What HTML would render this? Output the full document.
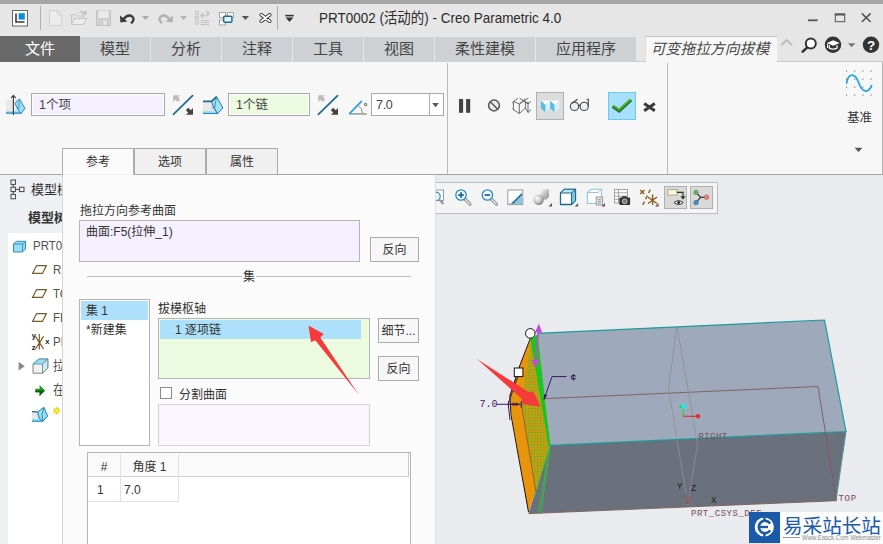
<!DOCTYPE html>
<html lang="zh-CN">
<head>
<meta charset="utf-8">
<title>PRT0002 - Creo Parametric 4.0</title>
<style>
*{box-sizing:border-box;margin:0;padding:0}
html,body{width:883px;height:544px;overflow:hidden;background:#e9ebef}
body{position:relative;font-family:"Liberation Sans","Noto Sans CJK SC",sans-serif;color:#333;font-size:12px}
.abs{position:absolute}
#topbar{left:0;top:0;width:883px;height:4px;background:#a5a5a5}
#titlebar{left:0;top:4px;width:883px;height:58px;background:#e6e6e6}
#title{left:319px;top:9px;font-size:14.5px;color:#2a2a2a;white-space:nowrap;line-height:18px;transform:scaleX(0.929);transform-origin:0 0}
.mtab{top:37px;height:25px;background:#cdd1d4;color:#454545;font-size:15px;line-height:23px;text-align:center;white-space:nowrap}
#ribbon{left:0;top:62px;width:883px;height:113px;background:#f7f7f7}
.vsep{width:1px;background:#b8babd;top:63px;height:111px}
.inp{height:23px;border:1px solid #a8a8a8;box-shadow:inset 0 0 0 1px #fff;font-size:12.5px;line-height:23px;padding-left:7px;color:#444;white-space:nowrap}
#leftpane{left:0;top:175px;width:70px;height:370px;background:#eef0f3}
#tree{left:8px;top:233px;width:60px;height:311px;background:#fff}
.ti{left:0;font-size:13px;color:#505050;line-height:16px;white-space:nowrap;transform:scaleX(0.88);transform-origin:0 0}
#panel{left:62px;top:175px;width:374px;height:370px;background:#fbfbfb;border-left:1px solid #d4d4d4;border-right:1px solid #dcdcdc}
.ptab{top:148px;height:27px;border:1px solid #ababab;background:#f0f0f0;font-size:12px;text-align:center;line-height:27px;color:#333}
.lbl{font-size:12px;color:#333;white-space:nowrap;line-height:14px}
.box{border:1px solid #b4b4b4}
.btn{border:1px solid #ababab;background:#f7f7f7;font-size:12px;text-align:center;color:#333;white-space:nowrap}
#vtoolbar{left:430px;top:182px;width:288px;height:32px;background:#f4f4f4;border:1px solid #bcbcbc}
svg{position:absolute;left:0;top:0;overflow:visible}
</style>
</head>
<body>
<!-- window chrome -->
<div id="topbar" class="abs"></div>
<div id="titlebar" class="abs"></div>
<div id="title" class="abs">PRT0002 (活动的) - Creo Parametric 4.0</div>

<!-- menu tabs -->
<div class="abs mtab" style="left:0;width:80px;background:#696969;color:#fff;top:36px;height:26px;line-height:25px">文件</div>
<div class="abs mtab" style="left:80px;width:70px">模型</div>
<div class="abs mtab" style="left:151px;width:70px">分析</div>
<div class="abs mtab" style="left:222px;width:70px">注释</div>
<div class="abs mtab" style="left:293px;width:70px">工具</div>
<div class="abs mtab" style="left:364px;width:70px">视图</div>
<div class="abs mtab" style="left:435px;width:100px">柔性建模</div>
<div class="abs mtab" style="left:536px;width:100px">应用程序</div>
<div class="abs mtab" style="left:645px;width:129px;padding-right:0;background:#f7f7f7;font-style:italic;font-size:14.8px;top:36px;height:27px;line-height:24px;border-top:1px solid #c6c6c6;border-left:1px solid #e0e0e0">可变拖拉方向拔模</div>
<div class="abs" style="left:774px;top:36px;width:3px;height:27px;background:#f7f7f7;border-top:1px solid #c6c6c6"></div>
<div class="abs" style="left:636px;top:61px;width:9px;height:1px;background:#c8cbce"></div>
<div class="abs" style="left:777px;top:61px;width:106px;height:1px;background:#c8cbce"></div>

<!-- ribbon -->
<div id="ribbon" class="abs"></div>
<div class="abs vsep" style="left:447px"></div>
<div class="abs vsep" style="left:667px"></div>
<div class="abs" style="left:0;top:174px;width:883px;height:1px;background:#a4a4a4"></div>
<div class="abs" style="left:882px;top:62px;width:1px;height:112px;background:#b4b4b4"></div>
<div class="abs inp" style="left:31px;top:93px;width:134px;background:#f5f0ff">1个项</div>
<div class="abs inp" style="left:228px;top:93px;width:82px;background:#ecfadf">1个链</div>
<div class="abs inp" style="left:371px;top:93px;width:73px;background:#fff;padding-left:4px;font-size:12.5px;letter-spacing:-0.3px;box-shadow:none">7.0</div>
<div class="abs" style="left:429px;top:94px;width:1px;height:21px;background:#ababab"></div>
<div class="abs" style="left:536px;top:92px;width:28px;height:28px;background:#dcdcdc;border:1px solid #b0b0b0"></div>
<div class="abs" style="left:608px;top:92px;width:28px;height:28px;background:#a6e0fb;border:1px solid #6fc6f3"></div>
<div class="abs lbl" style="left:847px;top:111px;font-size:12.5px">基准</div>

<!-- left model tree -->
<div id="leftpane" class="abs"></div>
<div id="tree" class="abs"></div>
<div class="abs" style="left:31px;top:182px;font-size:13px;color:#333;line-height:16px;white-space:nowrap">模型树</div>
<div class="abs" style="left:28px;top:210px;font-size:13px;color:#333;font-weight:bold;line-height:16px;white-space:nowrap">模型树</div>
<div class="abs ti" style="left:33px;top:238px">PRT0002.PRT</div>
<div class="abs ti" style="left:53px;top:262px">RIGHT</div>
<div class="abs ti" style="left:53px;top:286px">TOP</div>
<div class="abs ti" style="left:53px;top:310px">FRONT</div>
<div class="abs ti" style="left:53px;top:334px">PRT_CSYS_DEF</div>
<div class="abs ti" style="left:53px;top:358px">拉伸 1</div>
<div class="abs ti" style="left:53px;top:382px">在此插入</div>

<!-- viewport toolbar -->
<div id="vtoolbar" class="abs"></div>
<div class="abs" style="left:664px;top:186px;width:23px;height:23px;background:#d9d9d9;border:1px solid #b0b0b0"></div>
<div class="abs" style="left:690px;top:186px;width:23px;height:23px;background:#d9d9d9;border:1px solid #b0b0b0"></div>

<!-- slide-down panel -->
<div id="panel" class="abs"></div>
<div class="abs ptab" style="left:62px;width:72px;background:#fbfbfb;border-bottom:1px solid #f0f0f0;height:27px">参考</div>
<div class="abs ptab" style="left:134px;width:72px;height:27px">选项</div>
<div class="abs ptab" style="left:206px;width:72px;height:27px">属性</div>

<div class="abs lbl" style="left:80px;top:204px">拖拉方向参考曲面</div>
<div class="abs box" style="left:79px;top:220px;width:281px;height:42px;background:#f5f0ff"></div>
<div class="abs lbl" style="left:86px;top:225px">曲面:F5(拉伸_1)</div>
<div class="abs btn" style="left:370px;top:237px;width:49px;height:25px;line-height:25px">反向</div>

<div class="abs" style="left:87px;top:276px;width:324px;height:1px;background:#c0c0c0"></div>
<div class="abs lbl" style="left:242px;top:270px;width:14px;background:#fbfbfb;text-align:center">集</div>

<div class="abs box" style="left:79px;top:299px;width:71px;height:147px;background:#fff"></div>
<div class="abs" style="left:81px;top:301px;width:67px;height:19px;background:#ade1fb"></div>
<div class="abs lbl" style="left:86px;top:304px">集 1</div>
<div class="abs lbl" style="left:86px;top:323px">*新建集</div>

<div class="abs lbl" style="left:158px;top:302px">拔模枢轴</div>
<div class="abs box" style="left:158px;top:318px;width:212px;height:61px;background:#ecfadf"></div>
<div class="abs" style="left:160px;top:320px;width:201px;height:19px;background:#ade1fb"></div>
<div class="abs lbl" style="left:175px;top:323px">1 逐项链</div>
<div class="abs btn" style="left:378px;top:318px;width:41px;height:25px;line-height:25px">细节...</div>
<div class="abs btn" style="left:378px;top:356px;width:41px;height:25px;line-height:25px">反向</div>

<div class="abs" style="left:160px;top:387px;width:12px;height:12px;border:1px solid #8a8a8a;background:#fff"></div>
<div class="abs lbl" style="left:179px;top:388px">分割曲面</div>
<div class="abs" style="left:158px;top:404px;width:212px;height:42px;background:#f9f6fe;border:1px solid #d2d2d2"></div>

<div class="abs" style="left:87px;top:452px;width:324px;height:100px;background:#fff;border:1px solid #b4b4b4"></div>
<div class="abs" style="left:88px;top:453px;width:321px;height:24px;background:#fafafa;border-bottom:1px solid #d0d0d0;border-right:1px solid #c8c8c8"></div>
<div class="abs" style="left:120px;top:454px;width:1px;height:48px;background:#dfe3e8"></div>
<div class="abs" style="left:178px;top:454px;width:1px;height:48px;background:#dfe3e8"></div>
<div class="abs" style="left:88px;top:501px;width:91px;height:1px;background:#dfe3e8"></div>
<div class="abs lbl" style="left:88px;top:460px;width:32px;text-align:center">#</div>
<div class="abs lbl" style="left:121px;top:460px;width:57px;text-align:center">角度 1</div>
<div class="abs lbl" style="left:97px;top:483px">1</div>
<div class="abs lbl" style="left:124px;top:483px">7.0</div>

<!-- ICONS+MODEL -->
<svg id="gfx" width="883" height="544" viewBox="0 0 883 544">
<!--MODEL-->
<defs>
<pattern id="dots" width="3" height="3" patternUnits="userSpaceOnUse">
<rect width="3" height="3" fill="#e8940c"/><rect x="0" y="0" width="1.3" height="1.3" fill="#22c32a"/><rect x="1.6" y="1.6" width="1" height="1" fill="#3cc030"/>
</pattern>
</defs>
<g id="model" shape-rendering="auto">
<!-- front face -->
<polygon points="550,445.3 846,431.5 836,500.7 528.5,513.4" fill="#6a707c"/>
<!-- top face -->
<polygon points="537.5,333.3 824.5,320 846,431.5 550,445.3" fill="#9eaabb"/>
<!-- orange side -->
<polygon points="531,338 521,362 510,396 511.5,415 528.5,512 540,478 550,445.3 537.5,336" fill="#e8940c"/>
<polygon points="531,340 526,372 521.5,405 536,490 550,445.3 545,415 537.5,345" fill="url(#dots)"/>
<polyline points="530.5,338 520,365 509.8,396 511,415 528.5,512" fill="none" stroke="#1a1208" stroke-width="1"/>
<!-- green edge -->
<polygon points="531.5,339 537.8,334 550.2,445.3 548.6,445.3" fill="#22c32a"/>
<polyline points="531.5,339 549.6,445.3" fill="none" stroke="#18c420" stroke-width="2"/>
<polyline points="550,445.3 541,513.2 538.5,513 550,445.3 534,498" fill="none" stroke="#2fc43a" stroke-width="0.9"/>
<polyline points="521.5,405 536,492" fill="none" stroke="#7a5a30" stroke-width="0.8"/>
<!-- cyan edges -->
<polyline points="537.5,333.3 824.5,320 846,431.5 550,445.3" fill="none" stroke="#1a9c9a" stroke-width="1.2"/>
<line x1="846" y1="431.5" x2="836" y2="500.7" stroke="#4f9aa0" stroke-width="1"/>
<!-- datum planes -->
<polyline points="544,398.7 818,386.5 836.5,500.7 528.5,513.6" fill="none" stroke="#7e5a5c" stroke-width="0.9"/>
<polygon points="677,326 697.5,444 687.8,505 668.5,388" fill="none" stroke="#8d8f96" stroke-width="0.8"/>
<!-- csys -->
<line x1="683.3" y1="407" x2="683.3" y2="416.3" stroke="#2fd23a" stroke-width="1.2"/>
<line x1="683.3" y1="416.3" x2="697" y2="416.3" stroke="#e03030" stroke-width="1.2"/>
<circle cx="683.6" cy="406.3" r="2.6" fill="#22e8ee"/>
<circle cx="680.6" cy="406.6" r="1.4" fill="#2fd23a"/>
<circle cx="698" cy="416.3" r="2.2" fill="#ee2a2a"/>
<!-- purple drag handle -->
<polygon points="538.8,323.6 542.2,332.5 535,332.5" fill="#c24adf"/>
<polyline points="538.6,330 535.6,362" fill="none" stroke="#c24adf" stroke-width="1.6"/>
<polygon points="531.5,360 539.5,359.5 535.4,368" fill="#c24adf"/>
<circle cx="530.3" cy="333.4" r="4.8" fill="#fff" stroke="#111" stroke-width="1"/>
<rect x="514.3" y="368" width="8.6" height="8.6" fill="#fff" stroke="#111" stroke-width="1"/>
<!-- dimension -->
<g stroke="#3b1a66" stroke-width="1" fill="none">
<polyline points="497,404.3 521,404.3"/>
<polyline points="508.5,401 508.5,408"/>
<polyline points="521.3,401 521.3,408"/>
<polyline points="566.5,376.6 552,376.6 544,399.5"/>
<polyline points="518,376 508.2,404 510,420"/>
</g>
<polygon points="543.6,400.5 544.2,394 547.2,395.2" fill="#3b1a66"/>
<polygon points="510,404.3 514.5,402.6 514.5,406" fill="#3b1a66"/>
<polygon points="520,404.3 515.5,402.6 515.5,406" fill="#3b1a66"/>
<g font-family="Liberation Mono, monospace" font-size="10" fill="#3b1a66">
<text x="479.5" y="407.3" textLength="18" lengthAdjust="spacingAndGlyphs">7.0</text>
<text x="570.5" y="380.4" font-size="9.5" font-weight="bold">¢</text>
</g>
<g font-family="Liberation Mono, monospace" font-size="9" fill="#7b4a55" letter-spacing="0.4">
<text x="698.5" y="438.6" textLength="29">RIGHT</text>
<text x="838.5" y="501" textLength="18">TOP</text>
<text x="691" y="516" textLength="71">PRT_CSYS_DEF</text>
</g>
<g font-family="Liberation Mono, monospace" font-size="9" fill="#222">
<text x="677" y="488.5">Y</text><text x="690.8" y="491">Z</text><text x="711" y="502.5">X</text>
</g>
<polyline points="686,494 687.6,504 690,496" fill="none" stroke="#b03a3a" stroke-width="0.8"/>
<!-- red pointer arrows -->
<polygon points="477,359 528.5,392 533.5,391.5 540.6,406.7 522.5,404 522,399" fill="#f63a3c"/>
<polygon points="308.5,325.5 323.8,334 320.3,337.5 359,395 315.3,340.3 311,342.3" fill="#f63a3c"/>
</g>
<!--/MODEL-->
<!--ICONS-->
<g id="icons">
<!-- app icon -->
<rect x="12.5" y="10.5" width="15" height="15.5" fill="#fff" stroke="#666" stroke-width="1"/>
<polyline points="16,13.5 16,22 24.5,22" fill="none" stroke="#3a3a3a" stroke-width="1.6"/>
<rect x="18.6" y="13.2" width="6.2" height="6.4" fill="#0b8fdc"/>
<line x1="40.5" y1="6" x2="40.5" y2="30" stroke="#b0b0b0" stroke-width="1"/>
<!-- new file (disabled) -->
<path d="M49.5 10.5 H57.5 L61.7 14.7 V25.5 H49.5 Z" fill="#ececec" stroke="#cfcfcf" stroke-width="1"/>
<path d="M57.5 10.5 V14.7 H61.7" fill="none" stroke="#cfcfcf" stroke-width="1"/>
<!-- open (disabled) -->
<path d="M71.5 24.5 V14.5 H76 L77.5 16 H83.5 V18.5" fill="#e2e2e2" stroke="#c6c6c6" stroke-width="1"/>
<path d="M71.5 24.5 L74.5 18.5 H86.8 L83.5 24.5 Z" fill="#ececec" stroke="#c6c6c6" stroke-width="1"/>
<path d="M79.5 12.5 Q83 10.5 85 13.5 M85.6 10.6 V14.2 H82.2" fill="none" stroke="#c0c0c0" stroke-width="1.4"/>
<!-- save (disabled) -->
<path d="M96.5 10.5 H110.5 V25.5 H96.5 Z" fill="#d2d2d2" stroke="#c2c2c2" stroke-width="1"/>
<rect x="98.5" y="10.5" width="10" height="7.5" fill="#eaeaea"/>
<rect x="100" y="20" width="7.5" height="5.5" fill="#e6e6e6" stroke="#bdbdbd" stroke-width="0.8"/>
<rect x="101.3" y="21.3" width="1.8" height="4" fill="#c2c2c2"/>
<!-- undo -->
<path d="M123.5 19.3 Q128 13.6 132.3 16.6 Q135.3 19.6 131 23.4" fill="none" stroke="#3a3a3a" stroke-width="2.3"/>
<polygon points="120,15.6 120.4,22.4 127.4,21.6" fill="#3a3a3a"/>
<polygon points="142,16 149,16 145.5,20" fill="#a8a8a8"/>
<!-- redo (disabled) -->
<path d="M169.5 19.3 Q165 13.6 160.7 16.6 Q157.7 19.6 162 23.4" fill="none" stroke="#b2b2b2" stroke-width="2.3"/>
<polygon points="173,15.6 172.6,22.4 165.6,21.6" fill="#b2b2b2"/>
<polygon points="180,16 187,16 183.5,20" fill="#b4b4b4"/>
<!-- regenerate (disabled) -->
<g fill="none" stroke="#c4c4c4" stroke-width="1">
<rect x="195.3" y="11.5" width="3" height="3"/><rect x="195.3" y="16.3" width="3" height="3"/><rect x="195.3" y="21.2" width="3" height="3"/>
<path d="M200.5 20.5 H209.5 M200.5 22.5 H209.5 M200.5 24.5 H209.5"/>
<path d="M201 15.5 H206 M206.5 12.5 H209" stroke-width="1.6"/>
</g>
<polygon points="199.8,15.5 203,12.3 203,18.7" fill="#c4c4c4"/><polygon points="210,13.8 206.6,10.6 206.6,17" fill="#c4c4c4"/>
<!-- windows -->
<g fill="#fafafa" stroke="#a8a8a8" stroke-width="1">
<rect x="219.5" y="12.5" width="6" height="5"/><rect x="227.5" y="12.5" width="6" height="5"/><rect x="219.5" y="20" width="6" height="5"/>
</g>
<rect x="223.7" y="16.3" width="8.2" height="6" rx="1" fill="#e8f2f8" stroke="#1d6a96" stroke-width="1.4"/>
<polygon points="241.8,16 249,16 245.4,20" fill="#555"/>
<!-- close win X -->
<path d="M261.2 14.8 L269.8 21.2 M269.8 14.8 L261.2 21.2" fill="none" stroke="#333" stroke-width="3.6" stroke-linecap="round"/>
<path d="M261.2 14.8 L269.8 21.2 M269.8 14.8 L261.2 21.2" fill="none" stroke="#fff" stroke-width="1.8" stroke-linecap="round"/>
<line x1="277.5" y1="6" x2="277.5" y2="30" stroke="#b0b0b0" stroke-width="1"/>
<rect x="285.3" y="14.8" width="8.4" height="1.6" fill="#333"/><polygon points="285.6,17.6 293.4,17.6 289.5,22" fill="#333"/>
<!-- window controls -->
<rect x="808" y="19.4" width="9.6" height="1.8" fill="#555"/>
<rect x="835.3" y="14.5" width="9.4" height="7.2" fill="none" stroke="#555" stroke-width="1"/><rect x="834.8" y="13.3" width="10.4" height="2.2" fill="#555"/>
<path d="M861.8 13.4 L870.6 22 M870.6 13.4 L861.8 22" stroke="#555" stroke-width="1.6" fill="none"/>
<!-- tab row right icons -->
<polyline points="781.3,45 786.6,40.3 791.9,45" fill="none" stroke="#bdbdbd" stroke-width="2.2"/>
<circle cx="810.8" cy="43.6" r="5" fill="#fff" stroke="#333" stroke-width="2"/><line x1="807" y1="47.6" x2="802.7" y2="51.6" stroke="#333" stroke-width="2.6" stroke-linecap="round"/>
<circle cx="833" cy="44.8" r="8.2" fill="#333"/>
<polygon points="826.8,43 833.2,40.2 839.6,43 833.2,45.8" fill="#fff"/><path d="M829.3 45.3 V48.2 Q833.2 50.2 837 48.2 V45.3" fill="none" stroke="#fff" stroke-width="1.3"/><line x1="827.6" y1="43.6" x2="827.6" y2="48" stroke="#fff" stroke-width="1"/>
<polygon points="848,43.3 855.4,43.3 851.7,47.3" fill="#777"/>
<circle cx="871" cy="44.8" r="8.2" fill="#333"/>
<text x="871" y="49.6" font-family="Liberation Sans, sans-serif" font-weight="bold" font-size="13.5" fill="#fff" text-anchor="middle">?</text>

<!-- ribbon: draft hinge icon 1 -->
<g id="ic-pull">
<polygon points="6,99.5 9,97 17,97 16.5,99.5" fill="#fff"/>
<rect x="6" y="99.5" width="10.5" height="11.5" fill="#e9e9e9"/>
<polygon points="16.5,99.5 17.5,97.5 17.5,108 16.5,111" fill="#d0d0d0"/>
<rect x="6" y="111.2" width="15.5" height="1.3" fill="#8fd6f0"/><rect x="6" y="112.4" width="15.5" height="1.4" fill="#1f8cc4"/>
<polygon points="15,103.4 19.5,99 25,108.5 21,113.6 18.4,110.4" fill="#9adcf4" stroke="#2a8fbf" stroke-width="1" stroke-linejoin="round"/>
<polyline points="19.5,99 18.4,110.4" fill="none" stroke="#2a8fbf" stroke-width="0.8"/>
<line x1="13.4" y1="96" x2="13.4" y2="115" stroke="#444" stroke-width="1.2"/>
<polyline points="11,98.2 13.4,95.4 15.8,98.2" fill="none" stroke="#444" stroke-width="1.3"/>
</g>
<!-- flip icons -->
<g id="flip1">
<line x1="173.4" y1="114.4" x2="192.6" y2="95.6" stroke="#1d6a90" stroke-width="1.7" stroke-linecap="round"/>
<polygon points="173.2,95.2 180,95.2 178,97.2 180.2,99.6 177.8,102 175.4,99.8 173.2,102" fill="#bcbcbc"/>
<polygon points="193,114.8 186,114.8 188.2,112.6 185.8,110.2 188.2,107.8 190.7,110.2 193,108" fill="#444"/>
</g>
<use href="#flip1" x="145" y="0"/>
<!-- hinge icon 2 -->
<g id="ic-hinge">
<polygon points="203,101 207,97 216,97 211.5,101" fill="#fff"/>
<rect x="203" y="102" width="8.5" height="9.2" fill="#e9e9e9"/>
<polygon points="211.5,102 214,99.5 214,108.5 211.5,111.2" fill="#d4d4d4"/>
<polygon points="203,111.3 214,111.3 217.5,113.7 203,113.7" fill="#8fd6f0"/><rect x="203" y="113" width="14.5" height="1" fill="#1f8cc4"/>
<polygon points="211.5,101.3 216.5,96.6 223,108 217.5,113.6 214,108.5" fill="#a4e0f6" stroke="#1d7fb0" stroke-width="1" stroke-linejoin="round"/>
<polyline points="216.5,96.6 214.6,108.3 217.5,113.6" fill="none" stroke="#1d7fb0" stroke-width="0.8"/>
<polyline points="203,101.3 211.5,101.3 216.3,96.8" fill="none" stroke="#1d6a90" stroke-width="1.7"/>
</g>
<!-- angle icon -->
<line x1="349" y1="113.9" x2="366.8" y2="113.9" stroke="#9a9a9a" stroke-width="1.6"/>
<line x1="349.8" y1="113.3" x2="361.4" y2="101.4" stroke="#2a9fe0" stroke-width="1.7" stroke-linecap="round"/>
<path d="M358.6 105.8 Q362.3 108.5 362.4 113" fill="none" stroke="#8a8a8a" stroke-width="1"/>
<circle cx="365.6" cy="104.6" r="1.2" fill="none" stroke="#444" stroke-width="0.9"/>
<polygon points="432.2,103 439,103 435.6,107.2" fill="#555"/>
<!-- pause -->
<rect x="459" y="99" width="4.1" height="13.8" fill="#444"/><rect x="466.1" y="99" width="4.1" height="13.8" fill="#444"/>
<!-- no -->
<circle cx="494" cy="105.5" r="5.4" fill="#ededed" stroke="#555" stroke-width="1.5"/><line x1="490.2" y1="101.8" x2="497.8" y2="109.2" stroke="#555" stroke-width="1.5"/>
<!-- wireframe preview -->
<g fill="none" stroke="#4a4a4a" stroke-width="0.8">
<path d="M513.4 101.3 V109.5 L519.3 113.6 L525.4 108 V101.5 M519.3 104 V113.6 M513.4 101.3 L519.3 104 L525.4 98.6 M528 101.5 V112.4 L531 109.8 M525.4 108 L528 112.4 M525.4 101.5 L528 104"/>
<path d="M512.4 103 L517.8 98 M519.5 98 L528.2 104 M528.2 98 L519.5 104 M531 101.4 L528 104 M512.4 108.6 L514.2 110.4"/>
</g>
<!-- shaded preview (selected) -->
<g id="ic-shade">
<polygon points="541,100.5 550,100.5 545.5,105" fill="#fff"/><polygon points="550,100.5 559.3,100.5 554.7,105" fill="#fff"/>
<polygon points="541,100.7 545.6,105 545.6,112.4 541,108.3" fill="#55bce8"/><polygon points="550.1,100.7 554.7,105 554.7,112.4 550.1,108.3" fill="#55bce8"/>
<polygon points="550.1,100.7 545.6,105 545.6,112.4 550.1,108.3" fill="#d9f1fb"/><polygon points="559.3,100.7 554.7,105 554.7,112.4 559.3,108.3" fill="#d9f1fb"/>
</g>
<!-- glasses -->
<g fill="#eef2f4" stroke="#444" stroke-width="1.1">
<circle cx="574.5" cy="106.4" r="4.1"/><circle cx="584.2" cy="106.4" r="4.1"/>
<path d="M571.5 103.5 L577.5 99.2 M588.3 106 V99.3 L586.6 99.3 M578.6 105.6 Q579.4 104.8 580.2 105.6" fill="none"/>
</g>
<!-- check -->
<polyline points="612.8,106.2 619.2,110.8 631,99.8" fill="none" stroke="#1e6e2e" stroke-width="3.6" stroke-linejoin="miter"/>
<polyline points="613.4,105.4 619.2,109.4 630.4,99" fill="none" stroke="#a6d82a" stroke-width="1.3" stroke-linejoin="miter"/>
<polyline points="613,106.2 619.2,110.4 630.8,99.9" fill="none" stroke="#2f9a3a" stroke-width="1.6" stroke-linejoin="miter"/>
<!-- cancel x -->
<path d="M644.2 103.6 L654.8 110.8 M654.8 103.6 L644.2 110.8" stroke="#3a3a3a" stroke-width="3" fill="none"/>
<!-- datum sine -->
<g fill="#505050">
<rect x="846" y="70.6" width="1" height="1"/><rect x="854.2" y="70.6" width="1" height="1"/><rect x="862.3" y="70.6" width="1" height="1"/><rect x="870.5" y="70.6" width="1" height="1"/>
<rect x="846" y="78.6" width="1" height="1"/><rect x="854.2" y="78.6" width="1" height="1"/><rect x="862.3" y="78.6" width="1" height="1"/><rect x="870.5" y="78.6" width="1" height="1"/>
<rect x="846" y="86.6" width="1" height="1"/><rect x="854.2" y="86.6" width="1" height="1"/><rect x="862.3" y="86.6" width="1" height="1"/><rect x="870.5" y="86.6" width="1" height="1"/>
<rect x="846" y="94.6" width="1" height="1"/><rect x="854.2" y="94.6" width="1" height="1"/><rect x="862.3" y="94.6" width="1" height="1"/><rect x="870.5" y="94.6" width="1" height="1"/>
</g>
<path d="M846.6 83 C848.5 72.5 855 72.5 858.8 83 C862.5 93.5 868.5 93 871.6 85.6" fill="none" stroke="#2aa3de" stroke-width="1.8" stroke-linecap="round"/>
<polygon points="854.6,147.8 862.4,147.8 858.5,152" fill="#555"/>

<!-- model tree header icon -->
<g fill="#f6f6f6" stroke="#444" stroke-width="1">
<rect x="11" y="180" width="4.4" height="4.4"/><rect x="11" y="187.2" width="4.4" height="4.4"/><rect x="11" y="194.4" width="4.4" height="4.4"/><rect x="19.6" y="187.2" width="4.4" height="4.4"/>
<path d="M13.2 184.4 V187.2 M13.2 191.6 V194.4 M15.4 189.4 H19.6" fill="none"/>
</g>
<!-- tree icons -->
<polygon points="13.5,244 16.5,241.3 25.5,241.3 25.5,249 22.5,252 13.5,252" fill="#9adcf4" stroke="#2a8fbf" stroke-width="1" stroke-linejoin="round"/>
<polyline points="13.5,244 22.5,244 25.5,241.3 M22.5,244 22.5,252" fill="none" stroke="#2a8fbf" stroke-width="0.9"/>
<line x1="22.5" y1="244" x2="22.5" y2="252" stroke="#2a8fbf" stroke-width="0.9"/>
<g fill="#fff" stroke="#7a5a2a" stroke-width="1.2" stroke-linejoin="miter">
<polygon points="36.6,265.6 46.4,265.6 42.4,273.4 32.6,273.4"/>
<polygon points="36.6,289.6 46.4,289.6 42.4,297.4 32.6,297.4"/>
<polygon points="36.6,313.6 46.4,313.6 42.4,321.4 32.6,321.4"/>
</g>
<!-- csys icon -->
<g stroke="#7a4a1a" stroke-width="1.1" fill="none">
<path d="M39.3 334 V349.6 M35.4 336.4 L43.6 349 M43.6 336.4 L35.4 349"/>
</g>
<g font-family="Liberation Sans, sans-serif" font-size="7.5" fill="#222" font-weight="bold">
<text x="31.8" y="338.2">y</text><text x="31.8" y="349.5">z</text><text x="45.2" y="344.4">x</text>
</g>
<!-- expand arrow + extrude icon -->
<polygon points="18.6,361.8 18.6,370.6 24.8,366.2" fill="#8a8a8a"/>
<polygon points="33,364 39,359 47.8,359 47.8,368 42.5,373.2 33,373.2" fill="#f2f2f2" stroke="#777" stroke-width="0.9" stroke-linejoin="round"/>
<polygon points="33,364 39,359 47.8,359 42.5,364" fill="#9adcf4" stroke="#3a8fb8" stroke-width="0.8"/>
<polygon points="42.5,364 47.8,359 47.8,368 42.5,373.2" fill="#c8ecf8" stroke="#777" stroke-width="0.8"/>
<!-- insert arrow -->
<polygon points="35.3,388.8 39.6,388.8 39.6,385 45,390.5 39.6,396 39.6,392.2 35.3,392.2" fill="#1f9a1f"/>
<polygon points="35.3,390.5 45,390.5 39.6,396 39.6,392.2 35.3,392.2" fill="#0c5c0c"/>
<!-- draft feature icon -->
<polygon points="32,411.5 35,408.5 40,408.5 38,411.5" fill="#fff"/>
<rect x="32" y="411.8" width="7" height="6.6" fill="#e6e6e6"/>
<polygon points="32,418.8 40,418.8 43,421.6 32,421.6" fill="#8fd6f0"/><rect x="32" y="420.8" width="11" height="1" fill="#1f8cc4"/>
<polygon points="37.6,412 43.8,407.4 47.6,416 43,421.2 39,418" fill="#9adcf4" stroke="#1d7fb0" stroke-width="1" stroke-linejoin="round"/>
<polyline points="43.8,407.4 42,415 43,421.2 M42,415 39,418" fill="none" stroke="#1d7fb0" stroke-width="0.8"/>
<polyline points="32,411.6 37.6,411.8" fill="none" stroke="#1d6a90" stroke-width="1.3"/>
<g stroke="#e6d400" stroke-width="1.3"><path d="M56.5 407 V414.4 M52.8 410.7 H60.2 M53.9 408.1 L59.1 413.3 M59.1 408.1 L53.9 413.3"/></g>
<circle cx="56.5" cy="410.7" r="1.3" fill="#fff36a"/>

<!-- viewport toolbar icons -->
<clipPath id="cpv"><rect x="436" y="180" width="20" height="30"/></clipPath>
<g clip-path="url(#cpv)"><rect x="430" y="190" width="13.5" height="10.5" fill="#fff" stroke="#999" stroke-width="1"/>
<circle cx="436" cy="196.3" r="4.2" fill="#eaf6fc" stroke="#2a8abf" stroke-width="1.2"/><line x1="439.5" y1="199.8" x2="443.4" y2="204" stroke="#999" stroke-width="2.2"/></g>
<g id="zm">
<line x1="465" y1="199.2" x2="470" y2="204.2" stroke="#8f8f8f" stroke-width="3.2" stroke-linecap="round"/><line x1="465.2" y1="199.4" x2="469.8" y2="204" stroke="#ececec" stroke-width="1.3" stroke-linecap="round"/>
<circle cx="461" cy="195" r="5.2" fill="#f2fafe" stroke="#2a8abf" stroke-width="1.3"/>
<rect x="458.2" y="194.2" width="5.6" height="1.7" fill="#1d5f9a"/>
</g>
<rect x="460.2" y="192.2" width="1.7" height="5.6" fill="#1d5f9a"/>
<use href="#zm" x="26.4" y="0"/>
<rect x="507.8" y="190" width="15" height="14.6" fill="#fff" stroke="#9a9a9a" stroke-width="1"/>
<path d="M508.5 204 H522.3 V191 Q521 198 508.5 204 Z" fill="#8cc4dc"/>
<line x1="512.5" y1="203.5" x2="521.8" y2="194" stroke="#1d6a90" stroke-width="1.6"/>
<defs><radialGradient id="sph" cx="0.35" cy="0.35" r="0.8"><stop offset="0" stop-color="#ffffff"/><stop offset="0.55" stop-color="#bdbdbd"/><stop offset="1" stop-color="#5e5e5e"/></radialGradient>
<linearGradient id="cubg" x1="0" y1="0" x2="1" y2="1"><stop offset="0" stop-color="#f6f6f6"/><stop offset="1" stop-color="#8c8c8c"/></linearGradient></defs>
<polygon points="540.5,192 543.5,189.3 549,189.3 549,196.5 546.5,199.5 540.5,199.5" fill="url(#cubg)"/>
<circle cx="538.6" cy="199.8" r="5.2" fill="url(#sph)"/>
<polygon points="552,203 552,206.5 548.5,206.5" fill="#555"/>
<polygon points="560.5,193 564.5,189.3 575.5,189.3 575.5,200.5 571.5,204.5 560.5,204.5" fill="#fff" stroke="#1d6a90" stroke-width="1.3" stroke-linejoin="round"/>
<polygon points="560.5,193 564.5,189.3 575.5,189.3 571.5,193" fill="#bfe4f2" stroke="#1d6a90" stroke-width="1"/>
<polygon points="571.5,193 575.5,189.3 575.5,200.5 571.5,204.5" fill="#7fc4de" stroke="#1d6a90" stroke-width="1"/>
<polygon points="578.2,203 578.2,206.5 574.7,206.5" fill="#555"/>
<polygon points="587.4,192.5 591,189.3 601.5,189.3 601.5,199.5 598,203.5 587.4,203.5" fill="#fcfeff" stroke="#8cc8e8" stroke-width="1.1" stroke-linejoin="round"/>
<polyline points="587.4,192.5 598,192.5 601.5,189.3 M598,192.5" fill="none" stroke="#8cc8e8" stroke-width="1"/>
<rect x="596.2" y="197" width="6.4" height="8" fill="#f4f4f4" stroke="#8a8a8a" stroke-width="0.9"/>
<path d="M597.6 199.3 H601.2 M597.6 201.2 H601.2 M597.6 203 H601.2" stroke="#777" stroke-width="0.8"/>
<polygon points="605,203 605,206.5 601.5,206.5" fill="#555"/>
<g fill="#fff" stroke="#9a9a9a" stroke-width="0.9"><rect x="614.5" y="189.5" width="13" height="13.5"/><path d="M614.5 192.8 H627.5 M614.5 196.2 H627.5 M614.5 199.6 H627.5 M618.5 189.5 V203"/></g>
<rect x="619.3" y="197.6" width="10.8" height="7.4" rx="1" fill="#333"/><rect x="622.2" y="196.2" width="4.6" height="2" fill="#333"/>
<circle cx="624.7" cy="201.3" r="2.4" fill="#777" stroke="#ddd" stroke-width="0.8"/>
<g stroke="#8a5a1a" stroke-width="1.4" fill="none">
<path d="M640.3 190 L644.3 194 M644.3 190 L640.3 194"/>
<path d="M650.3 189.5 L648.6 193 M647.4 195.5 L645.6 199.2 M644.4 201.6 L642.8 205"/>
<path d="M652.6 194.5 V205 M648 197 L657 203.5 M657 197 L648 203.5"/>
</g>
<polygon points="658.5,203 658.5,206.5 655,206.5" fill="#555"/>
<!-- annotation display button -->
<rect x="667.8" y="189.7" width="9.2" height="5.4" fill="#fff5cf" stroke="#9a9a8a" stroke-width="0.8"/>
<polyline points="677,192.4 683,192.4 683,197.5" fill="none" stroke="#333" stroke-width="1.2"/><polygon points="680.3,196.2 685.7,196.2 683,199.6" fill="#333"/>
<path d="M674 202.6 Q678.6 198.8 683.2 202.6 Q678.6 206.4 674 202.6 Z" fill="#fff" stroke="#333" stroke-width="1"/><circle cx="678.6" cy="202.6" r="1.5" fill="#333"/>
<!-- model tree display button -->
<path d="M696 192.4 L700.6 197.4 L706.6 197.2 M700.6 197.4 L696 202.6" fill="none" stroke="#333" stroke-width="1.2"/>
<circle cx="696" cy="192.4" r="2.3" fill="#6cb36c" stroke="#4a8a4a" stroke-width="0.6"/>
<circle cx="706.6" cy="197.2" r="2.3" fill="#e88080" stroke="#b85050" stroke-width="0.6"/>
<circle cx="696" cy="202.6" r="2.3" fill="#4a94c4" stroke="#2a6a98" stroke-width="0.6"/>
</g>
<!--/ICONS-->
</svg>

<!-- watermark -->
<div class="abs" style="left:780px;top:512px;width:103px;height:32px;background:#fcfcfc"></div>
<div class="abs" style="left:749px;top:512px;width:31px;height:31px;background:#1a5aa8"></div>
<div class="abs" style="left:783px;top:513px;font-size:19.6px;line-height:24px;color:#1a5aa8;font-weight:400;white-space:nowrap;font-family:'Noto Sans CJK SC',sans-serif">易采站长站</div>
<div class="abs" style="left:783px;top:537px;width:17px;height:1px;background:#999"></div>
<div class="abs" style="left:802px;top:534px;font-size:7px;line-height:8px;color:#8a8a8a;white-space:nowrap;transform:scaleX(0.86);transform-origin:0 0">Www.Easck.Com Webmaster</div>
<svg width="883" height="544" viewBox="0 0 883 544">
<circle cx="764.3" cy="527" r="9.6" fill="#fff"/>
<path d="M770.2 523.6 A6.2 6.2 0 1 0 770.2 530.4" fill="none" stroke="#1a5aa8" stroke-width="2.6"/>
<rect x="759" y="525.8" width="9" height="2.4" fill="#1a5aa8"/>
<rect x="763.2" y="517" width="2.4" height="5" fill="#1a5aa8"/><rect x="763.2" y="532" width="2.4" height="5" fill="#1a5aa8"/>
</svg>
</body>
</html>
